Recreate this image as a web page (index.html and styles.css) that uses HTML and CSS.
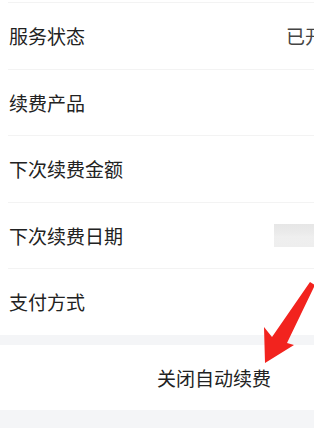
FILE: index.html
```html
<!DOCTYPE html>
<html lang="zh-CN">
<head>
<meta charset="utf-8">
<link rel="stylesheet" href="styles.css">
</head>
<body>
<div class="page">
  <div class="list">
    <div class="row"><span class="label">服务状态</span><span class="value">已开启</span></div>
    <div class="row"><span class="label">续费产品</span><span class="value"></span></div>
    <div class="row"><span class="label">下次续费金额</span><span class="value"></span></div>
    <div class="row"><span class="label">下次续费日期</span><span class="value"><span class="blur"></span></span></div>
    <div class="row last"><span class="label">支付方式</span><span class="value"></span></div>
  </div>
  <div class="gap"></div>
  <div class="action">关闭自动续费</div>
  <div class="gap tail"></div>
</div>
<svg class="arrow" width="314" height="428" viewBox="0 0 314 428">
  <polygon points="265,363 264,327 272,337 310,282 315,285 287,343 294,345" fill="#f2231e"/>
</svg>
</body>
</html>
```
FILE: styles.css
```css
html, body {
  margin: 0;
  padding: 0;
  background: #ffffff;
  overflow: hidden;
}
body {
  width: 314px;
  height: 428px;
  position: relative;
  font-family: "Noto Sans CJK SC", "Noto Sans", sans-serif;
}
.page {
  width: 428px;
}
.list {
  margin-top: 2px;
  border-top: 1px solid #f3f3f3;
  margin-left: 8px;
}
.row {
  height: 65.5px;
  border-bottom: 1px solid #f3f3f3;
  display: grid;
  grid-template-columns: 278px 1fr;
  align-items: center;
  font-size: 19px;
  line-height: 1;
}
.row.last {
  border-bottom: none;
}
.label {
  color: #222222;
  padding-left: 1px;
}
.value {
  color: #444444;
  display: flex;
  align-items: center;
}
.blur {
  display: block;
  width: 60px;
  height: 23px;
  margin-left: -12px;
  background: linear-gradient(180deg, #e6e6e6 0%, #ececec 45%, #efefef 55%, #eeeeee 100%);
}
.gap {
  height: 10px;
  background: #f4f5f7;
}
.gap.tail {
  height: 20px;
}
.action {
  height: 65px;
  display: flex;
  align-items: center;
  justify-content: center;
  font-size: 19px;
  color: #222222;
}
.arrow {
  position: absolute;
  left: 0;
  top: 0;
  pointer-events: none;
}
```
